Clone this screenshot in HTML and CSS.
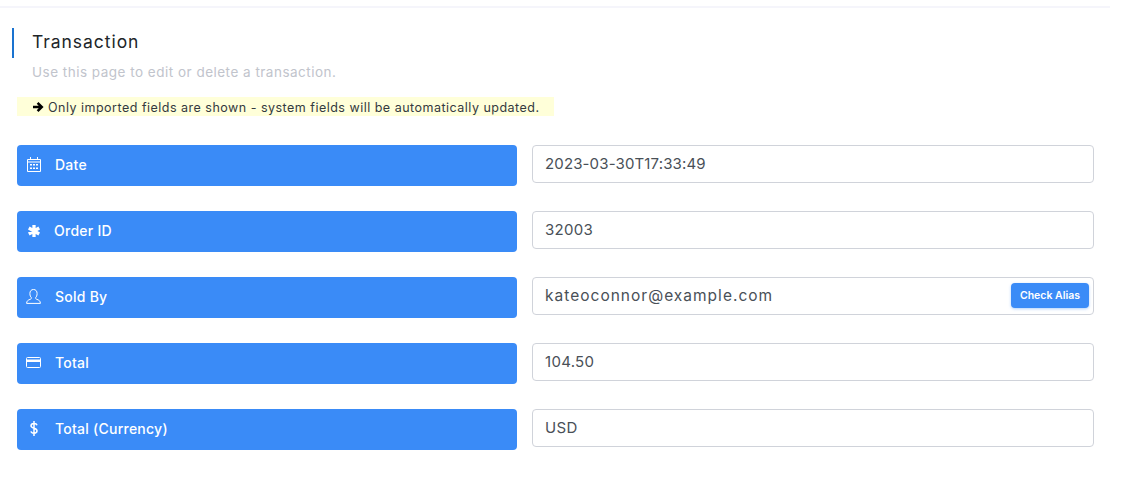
FILE: index.html
```html
<!DOCTYPE html>
<html lang="en">
<head>
<meta charset="utf-8">
<title>Transaction</title>
<link rel="stylesheet" href="styles.css">
</head>
<body>
<main class="page">
  <header class="heading">
    <h1 class="title">Transaction</h1>
    <p class="subtitle">Use this page to edit or delete a transaction.</p>
  </header>
  <p class="note"><svg class="arrow" viewBox="0 0 12 12"><path d="M1 6h8M5.600 1.800 9.800 6l-4.200 4.200" fill="none" stroke="currentColor" stroke-width="2.500"/></svg><span>Only imported fields are shown - system fields will be automatically updated.</span></p>
  <form class="fields">
    <div class="row">
      <label class="label"><span class="icon"><svg viewBox="0 0 14 15" width="14" height="15"><path d="M.5 2.500h13v12H.5zM.5 5h13M3.500 0v2.500M10.500 0v2.500" fill="none" stroke="#fff"/><path d="M3 7h2v1.500H3zM6 7h2v1.500H6zM9 7h2v1.500H9zM3 10.500h2V12H3zM6 10.500h2V12H6zM9 10.500h2V12H9z" fill="#fff"/></svg></span>Date</label>
      <div class="control"><span class="value value-date">2023-03-30T17:33:49</span></div>
    </div>
    <div class="row">
      <label class="label label-tight"><span class="icon"><svg viewBox="0 0 12 12" width="12" height="12"><path d="M6 6V0M6 6l5.200-3M6 6l5.200 3M6 6v6M6 6 .8 9M6 6 .8 3" stroke="#fff" stroke-width="3.300" fill="none"/></svg></span>Order ID</label>
      <div class="control"><span class="value">32003</span></div>
    </div>
    <div class="row">
      <label class="label"><span class="icon"><svg viewBox="0 0 15 15" width="15" height="15"><path d="M.6 14.400h13.800c0-2.500-1.600-3.400-3.400-4-1.200-.4-1.500-1-1.500-1.600.9-.8 1.600-2.200 1.600-4.200 0-2.500-1.300-4.100-3.600-4.100S3.900 2.100 3.900 4.600c0 2 .7 3.400 1.600 4.200 0 .6-.3 1.200-1.500 1.600-1.800.6-3.400 1.500-3.400 4z" fill="none" stroke="#fff"/></svg></span>Sold By</label>
      <div class="control"><span class="value value-wide">kateoconnor@example.com</span><button class="alias" type="button">Check Alias</button></div>
    </div>
    <div class="row">
      <label class="label"><span class="icon"><svg viewBox="0 0 15 11" width="15" height="11"><rect x=".5" y=".5" width="14" height="10" rx="1" fill="none" stroke="#fff"/><path d="M0 2.500h15v2.500H0z" fill="#fff"/></svg></span>Total</label>
      <div class="control"><span class="value">104.50</span></div>
    </div>
    <div class="row">
      <label class="label"><span class="icon"><svg viewBox="0 0 8 15" width="8" height="15"><path d="M7 4.200C6.700 3 5.500 2.500 4 2.500c-1.700 0-3 .8-3 2.300 0 3.200 6 1.700 6 5 0 1.600-1.400 2.400-3 2.400-1.500 0-2.700-.6-3-1.900M4 0v15" fill="none" stroke="#fff" stroke-width="1.500"/></svg></span>Total (Currency)</label>
      <div class="control"><span class="value">USD</span></div>
    </div>
  </form>
</main>
</body>
</html>
```

FILE: styles.css
```css
* { box-sizing: border-box; }
html, body { margin: 0; padding: 0; background: #fff; }
body {
  font-family: "Inter", "Liberation Sans", sans-serif;
  height: 482px;
  overflow: hidden;
}
.page {
  width: 1110px;
  margin-top: 6px;
  border-top: 2px solid #f5f5fb;
  padding: 20px 16px 0 12px;
}
.heading {
  border-left: 2px solid #1a73d0;
  padding-left: 18px;
  height: 30px;
}
.title {
  margin: 0;
  font-size: 17.500px;
  line-height: 28px;
  font-weight: 400;
  color: #212529;
  letter-spacing: .95px;
}
.subtitle {
  margin: 7px 0 0;
  font-size: 13.500px;
  line-height: 18px;
  color: #c1c4cc;
  letter-spacing: .49px;
  white-space: nowrap;
}
.note {
  display: flex;
  align-items: center;
  width: 537px;
  height: 19px;
  margin: 39px 0 0 5px;
  padding: 1px 0 0 15px;
  background: #ffffd9;
  font-size: 12.500px;
  color: #343a40;
  letter-spacing: .49px;
  white-space: nowrap;
}
.arrow { width: 12px; height: 12px; margin-right: 4px; color: #000; }
.fields {
  display: flex;
  flex-direction: column;
  gap: 25px;
  margin: 29px 0 0 5px;
}
.row {
  display: grid;
  grid-template-columns: 500px 562px;
  column-gap: 15px;
  align-items: start;
}
.label {
  display: flex;
  align-items: center;
  height: 41px;
  padding: 0 0 2px 8px;
  background: #3a8bf7;
  border-radius: 4px;
  color: #fff;
  font-size: 14px;
  font-weight: 500;
  letter-spacing: .25px;
}
.label-tight .icon { margin-right: 12px; }
.icon {
  display: flex;
  justify-content: center;
  width: 17px;
  margin-right: 13px;
}
.control {
  position: relative;
  display: flex;
  align-items: center;
  justify-content: space-between;
  height: 38px;
  padding: 0 4px 2px 12px;
  border: 1px solid #d0d3da;
  border-radius: 4px;
  background: #fff;
  font-size: 15px;
  color: #495057;
  letter-spacing: .3px;
}
.value-date { letter-spacing: .14px; }
.value-wide { font-size: 15.500px; letter-spacing: 1.010px; }
.alias {
  height: 25px;
  margin-top: 1px;
  padding: 0 9px;
  border: 0;
  border-radius: 4px;
  background: #3a8bf7;
  box-shadow: 0 1px 3px rgba(58, 139, 247, .4);
  color: #fff;
  font-family: inherit;
  font-size: 10.500px;
  font-weight: 600;
  letter-spacing: 0;
}
```
